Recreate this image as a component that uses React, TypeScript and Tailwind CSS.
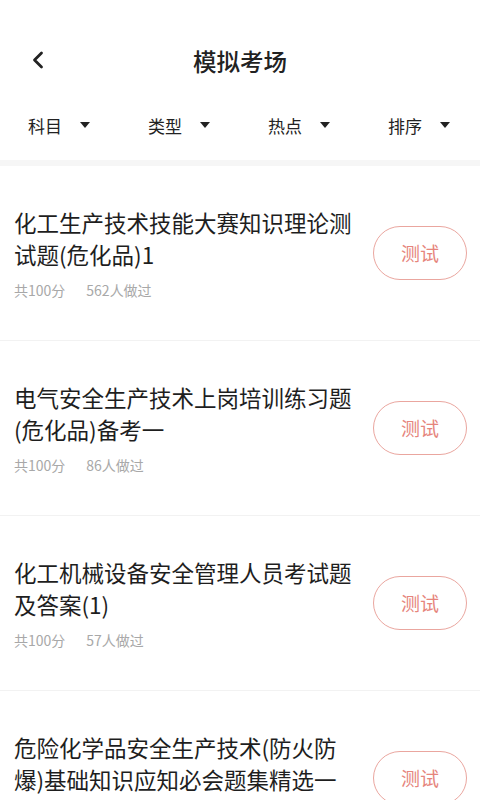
import { ChevronLeft } from 'lucide-react'

const exams = [
  { id: 1, title: '化工生产技术技能大赛知识理论测试题(危化品)1', total: 100, done: 562 },
  { id: 2, title: '电气安全生产技术上岗培训练习题(危化品)备考一', total: 100, done: 86 },
  { id: 3, title: '化工机械设备安全管理人员考试题及答案(1)', total: 100, done: 57 },
  { id: 4, title: '危险化学品安全生产技术(防火防爆)基础知识应知必会题集精选一', total: 100, done: 41 },
]

const filters = ['科目', '类型', '热点', '排序']

export default function App() {
  return (
    <div
      className="w-[480px] h-[800px] overflow-hidden bg-white text-[#222]"
      style={{ fontFamily: '"Noto Sans CJK SC", "Noto Sans", sans-serif' }}
    >
      <div className="pt-[30px]">
        <div className="relative h-[64px] flex items-center justify-center">
          <button className="absolute left-[24px] top-[16px] text-[#222]">
            <ChevronLeft size={28} strokeWidth={2.4} />
          </button>
          <h1 className="text-[23.5px] font-medium leading-none">模拟考场</h1>
        </div>
        <div className="grid grid-cols-4 h-[66px] items-center pb-[4px]">
          {filters.map((f) => (
            <div key={f} className="flex items-center pl-[28px]">
              <span className="text-[17px] leading-none">{f}</span>
              <span className="ml-[18px] w-0 h-0 border-l-[5.5px] border-r-[5.5px] border-t-[6px] border-l-transparent border-r-transparent border-t-[#222]" />
            </div>
          ))}
        </div>
      </div>
      <div className="h-[6px] bg-[#f6f6f6]" />

      <div>
        {exams.map((exam) => (
          <div key={exam.id} className="flex items-center border-b border-[#f2f2f2] h-[175px] pl-[14px] pr-[13px]">
            <div className="w-[345px]">
              <p className="text-[22.5px] leading-[32px] text-[#1e1e1e]">{exam.title}</p>
              <div className="mt-[10px] flex gap-[21px] text-[14px] leading-[20px] text-[#a8a8a8]">
                <span>共{exam.total}分</span>
                <span>{exam.done}人做过</span>
              </div>
            </div>
            <button className="ml-auto w-[94px] h-[54px] rounded-full border-[1.5px] border-[#eaa69f] text-[#e6857c] text-[19px]">
              测试
            </button>
          </div>
        ))}
      </div>
    </div>
  )
}
